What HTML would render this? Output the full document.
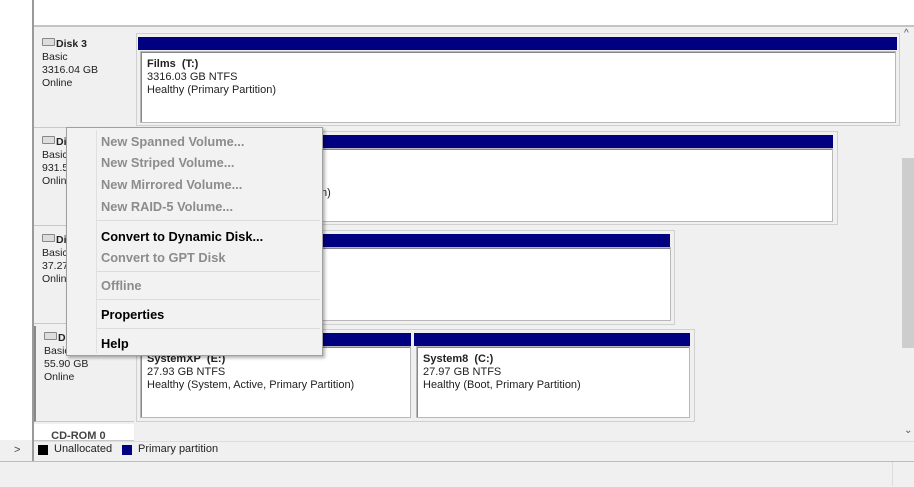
<!DOCTYPE html>
<html><head><style>
body{margin:0;width:914px;height:486px;position:relative;overflow:hidden;background:#fff;font-family:"Liberation Sans",sans-serif;font-size:11px;color:#222}
.a{position:absolute}
.lbl{position:absolute;left:34px;width:100px;background:#f0f0f0;border-bottom:1px solid #c8c8c8;padding:6px 0 0 8px;box-sizing:border-box;line-height:13px;font-size:10.5px}
.lbl b{font-weight:bold}
.bar{position:absolute;background:#000080;height:13px}
.box{position:absolute;background:#fff;border:1px solid #b8b8b8;box-shadow:inset 1px 1px 0 #888;padding:6px 6px;box-sizing:border-box;line-height:13px;font-size:11px}
.part{position:absolute;border:1px solid #d0d0d0;background:#f0f0f0}
.ic{display:inline-block;width:11px;height:6px;border:1px solid #888;border-radius:1px;background:#ddd;margin-right:1px;vertical-align:1px}
.menu{position:absolute;left:66px;top:127px;width:257px;height:229px;background:#f2f2f2;border:1px solid #a0a0a0;box-shadow:2px 2px 3px rgba(0,0,0,.3);box-sizing:border-box}
.mi{position:absolute;left:34px;font-weight:bold;font-size:12.8px;color:#000}
.dis{color:#8c8c8c}
.sep{position:absolute;left:30px;right:2px;height:1px;background:#dcdcdc}
</style></head><body>
<div class="a" style="left:32px;top:0;width:2px;height:464px;background:#9a9a9a"></div>
<div class="a" style="left:34px;top:25px;width:880px;height:2px;background:#c4c4c4"></div>
<div class="a" style="left:34px;top:27px;width:868px;height:414px;background:#f0f0f0"></div>
<div class="a" style="left:902px;top:27px;width:12px;height:414px;background:#f0f0f0"></div>
<div class="a" style="left:902px;top:158px;width:12px;height:190px;background:#cdcdcd"></div>
<div class="a" style="left:904px;top:28px;font-size:10px;color:#555">^</div>
<div class="a" style="left:904px;top:425px;font-size:10px;color:#555">&#8964;</div>

<div class="lbl" style="top:32px;height:96px"><span class="ic"></span><b>Disk 3</b><br>Basic<br>3316.04 GB<br>Online</div>
<div class="lbl" style="top:130px;height:96px"><span class="ic"></span><b>Disk 4</b><br>Basic<br>931.51 GB<br>Online</div>
<div class="lbl" style="top:228px;height:96px"><span class="ic"></span><b>Disk 5</b><br>Basic<br>37.27 GB<br>Online</div>
<div class="lbl" style="top:326px;height:96px;border-left:2px solid #888"><span class="ic"></span><b>Disk 6</b><br>Basic<br>55.90 GB<br>Online</div>
<div class="lbl" style="top:424px;height:17px;background:#fff;font-size:11px;padding-top:6px"><b style="color:#444">&nbsp;&nbsp;&nbsp;CD-ROM 0</b></div>

<div class="part" style="left:136px;top:33px;width:762px;height:91px"></div>
<div class="bar" style="left:138px;top:37px;width:759px"></div>
<div class="box" style="left:140px;top:51px;width:756px;height:72px"><b>Films&nbsp; (T:)</b><br>3316.03 GB NTFS<br>Healthy (Primary Partition)</div>

<div class="part" style="left:136px;top:131px;width:700px;height:92px"></div>
<div class="bar" style="left:138px;top:135px;width:695px"></div>
<div class="box" style="left:140px;top:148px;width:693px;height:74px"><div style="position:absolute;left:180px;top:38px">n)</div></div>

<div class="part" style="left:136px;top:230px;width:537px;height:93px"></div>
<div class="bar" style="left:138px;top:234px;width:532px"></div>
<div class="box" style="left:140px;top:247px;width:531px;height:74px"></div>

<div class="part" style="left:136px;top:329px;width:557px;height:91px"></div>
<div class="bar" style="left:138px;top:333px;width:273px"></div>
<div class="bar" style="left:414px;top:333px;width:276px"></div>
<div class="box" style="left:140px;top:346px;width:271px;height:72px"><b>SystemXP&nbsp; (E:)</b><br>27.93 GB NTFS<br>Healthy (System, Active, Primary Partition)</div>
<div class="box" style="left:416px;top:346px;width:274px;height:72px"><b>System8&nbsp; (C:)</b><br>27.97 GB NTFS<br>Healthy (Boot, Primary Partition)</div>

<div class="a" style="left:34px;top:441px;width:880px;height:19px;background:#f0f0f0;border-top:1px solid #ddd"></div>
<div class="a" style="left:38px;top:445px;width:10px;height:10px;background:#000"></div>
<div class="a" style="left:54px;top:443px;font-size:11px">Unallocated</div>
<div class="a" style="left:122px;top:445px;width:10px;height:10px;background:#000080"></div>
<div class="a" style="left:138px;top:443px;font-size:11px">Primary partition</div>
<div class="a" style="left:0;top:440px;width:32px;height:22px;background:#f0f0f0"></div>
<div class="a" style="left:14px;top:444px;font-size:11px;color:#444">&gt;</div>
<div class="a" style="left:0;top:461px;width:914px;height:25px;background:#f0f0f0;border-top:1px solid #bdbdbd"></div>
<div class="a" style="left:892px;top:462px;width:1px;height:24px;background:#ddd"></div>

<div class="menu">
<div class="a" style="left:29px;top:2px;width:1px;height:223px;background:#e0e0e0"></div>
<div class="mi dis" style="top:6px">New Spanned Volume...</div>
<div class="mi dis" style="top:27px">New Striped Volume...</div>
<div class="mi dis" style="top:49px">New Mirrored Volume...</div>
<div class="mi dis" style="top:71px">New RAID-5 Volume...</div>
<div class="sep" style="top:92px"></div>
<div class="mi" style="top:101px">Convert to Dynamic Disk...</div>
<div class="mi dis" style="top:122px">Convert to GPT Disk</div>
<div class="sep" style="top:143px"></div>
<div class="mi dis" style="top:150px">Offline</div>
<div class="sep" style="top:171px"></div>
<div class="mi" style="top:179px">Properties</div>
<div class="sep" style="top:200px"></div>
<div class="mi" style="top:208px">Help</div>
</div>
</body></html>
